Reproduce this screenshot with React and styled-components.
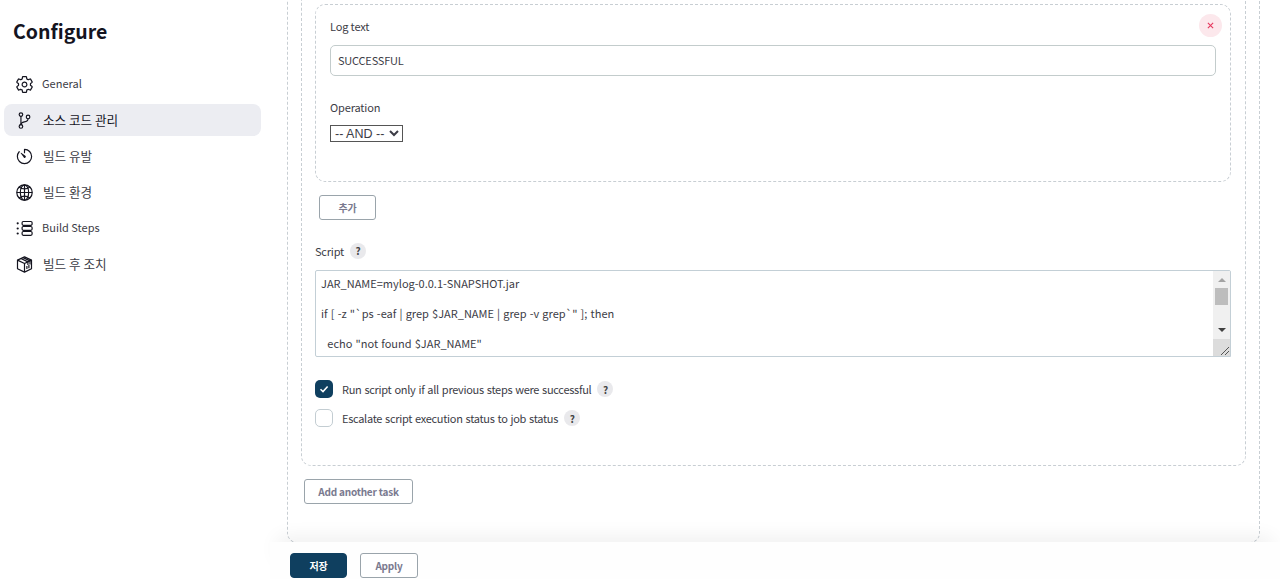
import React from "react";
import styled, { createGlobalStyle } from "styled-components";
import {
  IoSettingsOutline,
  IoGitBranchOutline,
  IoTimerOutline,
  IoGlobeOutline,
} from "react-icons/io5";

const GlobalStyle = createGlobalStyle`
  *, *::before, *::after { box-sizing: border-box; }
  html, body { margin: 0; padding: 0; height: 100%; overflow: hidden; background: #fff; }
  body {
    font-family: "Noto Sans CJK KR", "Noto Sans", "Liberation Sans", sans-serif;
    color: #3c3c46;
    font-size: 12px;
  }
`;

const Page = styled.div`
  display: grid;
  grid-template-columns: 270px 1fr;
  height: 579px;
  overflow: hidden;
`;

const Sidebar = styled.aside`
  padding: 17px 9px 0 4px;
`;

const Title = styled.h1`
  margin: 0 0 24px 9px;
  font-size: 19.5px;
  line-height: 27px;
  font-weight: 700;
  color: #14141f;
`;

const Nav = styled.nav`
  display: flex;
  flex-direction: column;
  gap: 4px;
`;

const NavItem = styled.div`
  display: flex;
  align-items: center;
  gap: 8px;
  height: 32px;
  padding-left: 11px;
  border-radius: 8px;
  background: ${(p) => (p.$active ? "#ecedf2" : "transparent")};
  svg { width: 19px; height: 19px; flex: none; color: #14141f; }
`;

const NavLabel = styled.span`
  padding-bottom: 2px;
  font-size: ${(p) => (p.$ko ? "12.6px" : "11px")};
  margin-left: ${(p) => (p.$ko ? "1px" : "0")};
  color: ${(p) => (p.$active ? "#14141f" : "#3c3c46")};
`;

const Main = styled.main`
  display: flex;
  flex-direction: column;
  height: 579px;
  min-width: 0;
  position: relative;
`;

const Scroller = styled.div`
  flex: 1;
  min-height: 0;
  overflow: hidden;
  padding: 0 20px 0 17px;
`;

const Dashed = styled.div`
  border: 1px dashed #c8ced3;
  border-radius: 10px;
`;

const OuterBox = styled(Dashed)`
  margin-top: -60px;
  height: 603px;
  padding: 0 13px;
`;

const TaskBox = styled(Dashed)`
  height: 525px;
  padding: 0 14px 0 13px;
`;

const CondBox = styled(Dashed)`
  position: relative;
  margin-top: 62px;
  height: 178px;
  padding: 14px 14px 0;
`;

const Label = styled.div`
  font-size: 11px;
  line-height: 15px;
  letter-spacing: -0.15px;
`;

const TextInput = styled.div`
  margin-top: 11px;
  height: 31px;
  border: 1px solid #c3cccc;
  border-radius: 5px;
  padding: 0 7px 2px;
  display: flex;
  align-items: center;
  font-size: 11px;
  letter-spacing: -0.2px;
`;

const CloseButton = styled.div`
  position: absolute;
  top: 9px;
  right: 8px;
  width: 23px;
  height: 23px;
  border-radius: 50%;
  background: #fce8ec;
  display: flex;
  align-items: center;
  justify-content: center;
  svg { width: 7px; height: 7px; }
`;

const SelectBox = styled.select`
  display: block;
  margin-top: 10px;
  width: 73px;
  height: 17px;
  padding: 0;
  border: 1px solid #555;
  background: #fff;
  border-radius: 0;
  font-family: "Liberation Sans", sans-serif;
  font-size: 12.5px;
  color: #3c3c46;
`;

const OperationLabel = styled(Label)`
  margin-top: 24px;
`;

const GhostButton = styled.div`
  display: inline-flex;
  align-items: center;
  justify-content: center;
  height: 25px;
  width: ${(p) => p.$w}px;
  border: 1px solid #9aa4ab;
  border-radius: 3px;
  background: #fff;
  font-size: 10px;
  font-weight: 700;
  letter-spacing: -0.2px;
  color: #7a7a8f;
`;

const AddRow = styled.div`
  margin: 13px 0 0 4px;
  height: 25px;
`;

const ScriptLabel = styled.div`
  margin-top: 23px;
  display: flex;
  align-items: center;
  gap: 6px;
  font-size: 11px;
  line-height: 16px;
  letter-spacing: -0.2px;
`;

const Help = styled.span`
  width: 16px;
  height: 16px;
  border-radius: 50%;
  background: #e9e9ec;
  color: #444;
  font-size: 10px;
  font-weight: 700;
  display: inline-flex;
  align-items: center;
  justify-content: center;
  flex: none;
`;

const ScriptArea = styled.div`
  margin-top: 11px;
  height: 87px;
  border: 1px solid #c3cfd6;
  border-radius: 2px 2px 0 2px;
  display: flex;
  overflow: hidden;
`;

const ScriptText = styled.div`
  flex: 1;
  padding: 5px 5px 0;
  font-size: 11px;
  line-height: 15px;
  word-spacing: 0.7px;
`;

const ScriptLine = styled.div`
  height: 30px;
  white-space: pre;
`;

const Scrollbar = styled.div`
  width: 17px;
  background: #f0f0f0;
  display: flex;
  flex-direction: column;
  align-items: center;
  flex: none;
`;

const Arrow = styled.div`
  width: 0;
  height: 0;
  border-left: 4px solid transparent;
  border-right: 4px solid transparent;
  ${(p) => (p.$up
    ? "border-bottom: 4px solid #a3a3a3; margin-top: 7px;"
    : "border-top: 4px solid #404040; margin-top: 23px;")}
`;

const Thumb = styled.div`
  width: 13px;
  height: 17px;
  margin-top: 6px;
  background: #bdbdbd;
`;

const Corner = styled.div`
  margin-top: auto;
  width: 17px;
  height: 17px;
  background: #dcdcdc;
  display: flex;
  svg { width: 17px; height: 17px; }
`;

const CheckRow = styled.div`
  display: flex;
  align-items: center;
  height: 18px;
  margin-top: ${(p) => p.$mt}px;
  font-size: 11px;
  letter-spacing: -0.3px;
  word-spacing: 0.8px;
`;

const CheckBox = styled.span`
  width: 18px;
  height: 18px;
  border-radius: 5px;
  flex: none;
  margin-right: 9px;
  display: flex;
  align-items: center;
  justify-content: center;
  background: ${(p) => (p.$on ? "#0f3f5f" : "#fff")};
  border: ${(p) => (p.$on ? "none" : "1.5px solid #c3cdd2")};
  svg { width: 10px; height: 10px; }
`;

const CheckHelp = styled(Help)`
  margin-left: 6px;
`;

const AddTaskRow = styled.div`
  margin: 13px 0 0 3px;
`;

const BottomBar = styled.div`
  flex: none;
  height: 37px;
  background: #fefefe;
  box-shadow: 0 -12px 20px -8px rgba(0, 0, 0, 0.07);
  display: flex;
  align-items: flex-start;
  gap: 13px;
  padding: 11px 0 0 20px;
  position: relative;
  z-index: 1;
`;

const SaveButton = styled(GhostButton)`
  background: #0f3f5f;
  border-color: #0f3f5f;
  color: #fff;
  border-radius: 4px;
`;

const StepsIcon = () => (
  <svg viewBox="-0.5 -0.5 19 19" fill="none" stroke="currentColor" strokeWidth="1.2">
    <rect x="6.6" y="2" width="10" height="3.8" rx="1.2" />
    <rect x="6.6" y="7" width="10" height="3.8" rx="1.2" />
    <rect x="6.6" y="12" width="10" height="3.8" rx="1.2" />
    <circle cx="2.2" cy="3.8" r="1.1" fill="currentColor" stroke="none" />
    <circle cx="2.2" cy="9" r="1.1" fill="currentColor" stroke="none" />
    <circle cx="2.2" cy="14" r="1.1" fill="currentColor" stroke="none" />
  </svg>
);

const PackageIcon = () => (
  <svg viewBox="-0.5 -0.5 19 19" fill="none" stroke="currentColor" strokeWidth="1.2" strokeLinejoin="round">
    <path d="M9 1.4 16 4.6v8.6l-7 3.4-7-3.4V4.6z" />
    <path d="M2 4.6 9 8l7-3.4M9 8v8.6" />
    <path d="M5.4 3 12.4 6.4v3M7.6 2.1 14.5 5.4v3.6M11.4 10.4v3.2M13.4 9.6v3.2" />
  </svg>
);

const navItems = [
  { label: "General", icon: <IoSettingsOutline /> },
  { label: "소스 코드 관리", icon: <IoGitBranchOutline />, active: true, ko: true },
  { label: "빌드 유발", icon: <IoTimerOutline />, ko: true },
  { label: "빌드 환경", icon: <IoGlobeOutline />, ko: true },
  { label: "Build Steps", icon: <StepsIcon /> },
  { label: "빌드 후 조치", icon: <PackageIcon />, ko: true },
];

const scriptLines = [
  "JAR_NAME=mylog-0.0.1-SNAPSHOT.jar",
  'if [ -z "`ps -eaf | grep $JAR_NAME | grep -v grep`" ]; then',
  '  echo "not found $JAR_NAME"',
];

export default function App() {
  return (
    <>
      <GlobalStyle />
      <Page>
        <Sidebar>
          <Title>Configure</Title>
          <Nav>
            {navItems.map((item) => (
              <NavItem key={item.label} $active={item.active}>
                {item.icon}
                <NavLabel $ko={item.ko} $active={item.active}>{item.label}</NavLabel>
              </NavItem>
            ))}
          </Nav>
        </Sidebar>
        <Main>
          <Scroller>
            <OuterBox>
              <TaskBox>
                <CondBox>
                  <Label>Log text</Label>
                  <CloseButton>
                    <svg viewBox="0 0 8 8" stroke="#e6395f" strokeWidth="1.3">
                      <path d="M1 1l6 6M7 1 1 7" />
                    </svg>
                  </CloseButton>
                  <TextInput>SUCCESSFUL</TextInput>
                  <OperationLabel>Operation</OperationLabel>
                  <SelectBox defaultValue="and">
                    <option value="and">-- AND --</option>
                  </SelectBox>
                </CondBox>
                <AddRow>
                  <GhostButton $w={57}>추가</GhostButton>
                </AddRow>
                <ScriptLabel>
                  Script <Help>?</Help>
                </ScriptLabel>
                <ScriptArea>
                  <ScriptText>
                    {scriptLines.map((line) => (
                      <ScriptLine key={line}>{line}</ScriptLine>
                    ))}
                  </ScriptText>
                  <Scrollbar>
                    <Arrow $up />
                    <Thumb />
                    <Arrow />
                    <Corner>
                      <svg viewBox="0 0 17 17" stroke="#555" strokeWidth="1">
                        <path d="M8 16 16 8M12 16l4-4" />
                      </svg>
                    </Corner>
                  </Scrollbar>
                </ScriptArea>
                <CheckRow $mt={23}>
                  <CheckBox $on>
                    <svg viewBox="0 0 10 10" fill="none" stroke="#fff" strokeWidth="1.5">
                      <path d="M1.5 5.2 4 7.6 8.6 2.4" />
                    </svg>
                  </CheckBox>
                  Run script only if all previous steps were successful
                  <CheckHelp>?</CheckHelp>
                </CheckRow>
                <CheckRow $mt={11}>
                  <CheckBox />
                  Escalate script execution status to job status
                  <CheckHelp>?</CheckHelp>
                </CheckRow>
              </TaskBox>
              <AddTaskRow>
                <GhostButton $w={109}>Add another task</GhostButton>
              </AddTaskRow>
            </OuterBox>
          </Scroller>
          <BottomBar>
            <SaveButton $w={57}>저장</SaveButton>
            <GhostButton $w={58}>Apply</GhostButton>
          </BottomBar>
        </Main>
      </Page>
    </>
  );
}
